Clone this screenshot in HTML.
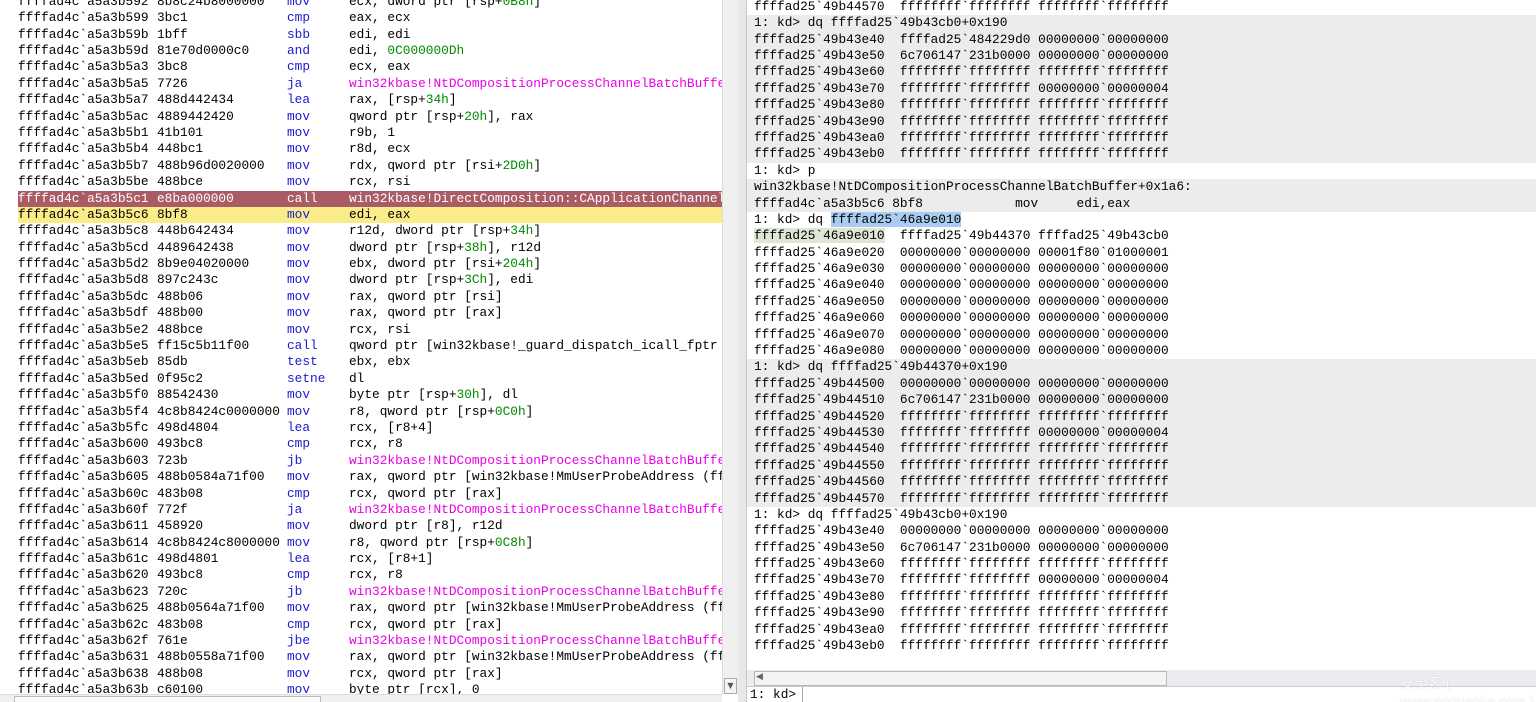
<!DOCTYPE html>
<html><head><meta charset="utf-8"><style>
html,body{margin:0;padding:0;width:1536px;height:702px;overflow:hidden;background:#fff;}
body{font-family:"Liberation Mono",monospace;font-size:12.8px;color:#000;position:relative;}
.l{position:absolute;left:0;top:-6.2px;width:722px;height:700px;overflow:hidden;}
.r{position:absolute;left:747px;top:-1.2px;width:789px;height:670px;overflow:hidden;}
.ln{height:16.4px;line-height:16.4px;white-space:pre;}
.l .ln{padding-left:18px;position:relative;}
.a{display:inline-block;width:139px}
.o{display:inline-block;width:130px}
.m{display:inline-block;width:62px;color:#1a1ad0}
.s{color:#e800e8}.n{color:#008a00}
.l .red{background:#a95c66;color:#fff;margin-left:18px;padding-left:0}.red .m{color:#fff}
.l .yel{background:#fbec8a;margin-left:18px;padding-left:0}
.r .ln{padding-left:7px}
.g{background:#ececec}
.hl{background:#dfe6d6}.sel{background:#a8cdf0}
</style></head><body>
<div class="l">
<div class="ln"><span class="a">ffffad4c`a5a3b592</span><span class="o">8b8c24b8000000</span><span class="m">mov</span>ecx, dword ptr [rsp+<span class="n">0B8h</span>]</div>
<div class="ln"><span class="a">ffffad4c`a5a3b599</span><span class="o">3bc1</span><span class="m">cmp</span>eax, ecx</div>
<div class="ln"><span class="a">ffffad4c`a5a3b59b</span><span class="o">1bff</span><span class="m">sbb</span>edi, edi</div>
<div class="ln"><span class="a">ffffad4c`a5a3b59d</span><span class="o">81e70d0000c0</span><span class="m">and</span>edi, <span class="n">0C000000Dh</span></div>
<div class="ln"><span class="a">ffffad4c`a5a3b5a3</span><span class="o">3bc8</span><span class="m">cmp</span>ecx, eax</div>
<div class="ln"><span class="a">ffffad4c`a5a3b5a5</span><span class="o">7726</span><span class="m">ja</span><span class="s">win32kbase!NtDCompositionProcessChannelBatchBuffer+0x1b8</span></div>
<div class="ln"><span class="a">ffffad4c`a5a3b5a7</span><span class="o">488d442434</span><span class="m">lea</span>rax, [rsp+<span class="n">34h</span>]</div>
<div class="ln"><span class="a">ffffad4c`a5a3b5ac</span><span class="o">4889442420</span><span class="m">mov</span>qword ptr [rsp+<span class="n">20h</span>], rax</div>
<div class="ln"><span class="a">ffffad4c`a5a3b5b1</span><span class="o">41b101</span><span class="m">mov</span>r9b, 1</div>
<div class="ln"><span class="a">ffffad4c`a5a3b5b4</span><span class="o">448bc1</span><span class="m">mov</span>r8d, ecx</div>
<div class="ln"><span class="a">ffffad4c`a5a3b5b7</span><span class="o">488b96d0020000</span><span class="m">mov</span>rdx, qword ptr [rsi+<span class="n">2D0h</span>]</div>
<div class="ln"><span class="a">ffffad4c`a5a3b5be</span><span class="o">488bce</span><span class="m">mov</span>rcx, rsi</div>
<div class="ln red"><span class="a">ffffad4c`a5a3b5c1</span><span class="o">e8ba000000</span><span class="m">call</span>win32kbase!DirectComposition::CApplicationChannel::ProcessCommandBuffer</div>
<div class="ln yel"><span class="a">ffffad4c`a5a3b5c6</span><span class="o">8bf8</span><span class="m">mov</span>edi, eax</div>
<div class="ln"><span class="a">ffffad4c`a5a3b5c8</span><span class="o">448b642434</span><span class="m">mov</span>r12d, dword ptr [rsp+<span class="n">34h</span>]</div>
<div class="ln"><span class="a">ffffad4c`a5a3b5cd</span><span class="o">4489642438</span><span class="m">mov</span>dword ptr [rsp+<span class="n">38h</span>], r12d</div>
<div class="ln"><span class="a">ffffad4c`a5a3b5d2</span><span class="o">8b9e04020000</span><span class="m">mov</span>ebx, dword ptr [rsi+<span class="n">204h</span>]</div>
<div class="ln"><span class="a">ffffad4c`a5a3b5d8</span><span class="o">897c243c</span><span class="m">mov</span>dword ptr [rsp+<span class="n">3Ch</span>], edi</div>
<div class="ln"><span class="a">ffffad4c`a5a3b5dc</span><span class="o">488b06</span><span class="m">mov</span>rax, qword ptr [rsi]</div>
<div class="ln"><span class="a">ffffad4c`a5a3b5df</span><span class="o">488b00</span><span class="m">mov</span>rax, qword ptr [rax]</div>
<div class="ln"><span class="a">ffffad4c`a5a3b5e2</span><span class="o">488bce</span><span class="m">mov</span>rcx, rsi</div>
<div class="ln"><span class="a">ffffad4c`a5a3b5e5</span><span class="o">ff15c5b11f00</span><span class="m">call</span>qword ptr [win32kbase!_guard_dispatch_icall_fptr (ff</div>
<div class="ln"><span class="a">ffffad4c`a5a3b5eb</span><span class="o">85db</span><span class="m">test</span>ebx, ebx</div>
<div class="ln"><span class="a">ffffad4c`a5a3b5ed</span><span class="o">0f95c2</span><span class="m">setne</span>dl</div>
<div class="ln"><span class="a">ffffad4c`a5a3b5f0</span><span class="o">88542430</span><span class="m">mov</span>byte ptr [rsp+<span class="n">30h</span>], dl</div>
<div class="ln"><span class="a">ffffad4c`a5a3b5f4</span><span class="o">4c8b8424c0000000</span><span class="m">mov</span>r8, qword ptr [rsp+<span class="n">0C0h</span>]</div>
<div class="ln"><span class="a">ffffad4c`a5a3b5fc</span><span class="o">498d4804</span><span class="m">lea</span>rcx, [r8+4]</div>
<div class="ln"><span class="a">ffffad4c`a5a3b600</span><span class="o">493bc8</span><span class="m">cmp</span>rcx, r8</div>
<div class="ln"><span class="a">ffffad4c`a5a3b603</span><span class="o">723b</span><span class="m">jb</span><span class="s">win32kbase!NtDCompositionProcessChannelBatchBuffer+0x200</span></div>
<div class="ln"><span class="a">ffffad4c`a5a3b605</span><span class="o">488b0584a71f00</span><span class="m">mov</span>rax, qword ptr [win32kbase!MmUserProbeAddress (ff</div>
<div class="ln"><span class="a">ffffad4c`a5a3b60c</span><span class="o">483b08</span><span class="m">cmp</span>rcx, qword ptr [rax]</div>
<div class="ln"><span class="a">ffffad4c`a5a3b60f</span><span class="o">772f</span><span class="m">ja</span><span class="s">win32kbase!NtDCompositionProcessChannelBatchBuffer+0x200</span></div>
<div class="ln"><span class="a">ffffad4c`a5a3b611</span><span class="o">458920</span><span class="m">mov</span>dword ptr [r8], r12d</div>
<div class="ln"><span class="a">ffffad4c`a5a3b614</span><span class="o">4c8b8424c8000000</span><span class="m">mov</span>r8, qword ptr [rsp+<span class="n">0C8h</span>]</div>
<div class="ln"><span class="a">ffffad4c`a5a3b61c</span><span class="o">498d4801</span><span class="m">lea</span>rcx, [r8+1]</div>
<div class="ln"><span class="a">ffffad4c`a5a3b620</span><span class="o">493bc8</span><span class="m">cmp</span>rcx, r8</div>
<div class="ln"><span class="a">ffffad4c`a5a3b623</span><span class="o">720c</span><span class="m">jb</span><span class="s">win32kbase!NtDCompositionProcessChannelBatchBuffer+0x200</span></div>
<div class="ln"><span class="a">ffffad4c`a5a3b625</span><span class="o">488b0564a71f00</span><span class="m">mov</span>rax, qword ptr [win32kbase!MmUserProbeAddress (ff</div>
<div class="ln"><span class="a">ffffad4c`a5a3b62c</span><span class="o">483b08</span><span class="m">cmp</span>rcx, qword ptr [rax]</div>
<div class="ln"><span class="a">ffffad4c`a5a3b62f</span><span class="o">761e</span><span class="m">jbe</span><span class="s">win32kbase!NtDCompositionProcessChannelBatchBuffer+0x200</span></div>
<div class="ln"><span class="a">ffffad4c`a5a3b631</span><span class="o">488b0558a71f00</span><span class="m">mov</span>rax, qword ptr [win32kbase!MmUserProbeAddress (ff</div>
<div class="ln"><span class="a">ffffad4c`a5a3b638</span><span class="o">488b08</span><span class="m">mov</span>rcx, qword ptr [rax]</div>
<div class="ln"><span class="a">ffffad4c`a5a3b63b</span><span class="o">c60100</span><span class="m">mov</span>byte ptr [rcx], 0</div>
</div>
<div style="position:absolute;left:722px;top:0;width:15px;height:694px;background:#f0f0f0;border-left:1px solid #dcdcdc;"></div>
<div style="position:absolute;left:724px;top:678px;width:11px;height:14px;border:1px solid #aaa;background:#f4f4f4;font-size:8px;line-height:14px;text-align:center;color:#555;font-family:'DejaVu Sans',sans-serif;">▼</div>
<div style="position:absolute;left:0;top:694px;width:722px;height:8px;background:#f0f0f0;border-top:1px solid #ddd;"></div>
<div style="position:absolute;left:14px;top:696px;width:305px;height:8px;border:1px solid #bbb;background:#fafafa"></div>
<div style="position:absolute;left:738px;top:0;width:8px;height:702px;background:#e8e8e8;border-right:1px solid #c8c8c8;"></div>
<div class="r">
<div class="ln">ffffad25`49b44570  ffffffff`ffffffff ffffffff`ffffffff</div>
<div class="ln g">1: kd&gt; dq ffffad25`49b43cb0+0x190</div>
<div class="ln g">ffffad25`49b43e40  ffffad25`484229d0 00000000`00000000</div>
<div class="ln g">ffffad25`49b43e50  6c706147`231b0000 00000000`00000000</div>
<div class="ln g">ffffad25`49b43e60  ffffffff`ffffffff ffffffff`ffffffff</div>
<div class="ln g">ffffad25`49b43e70  ffffffff`ffffffff 00000000`00000004</div>
<div class="ln g">ffffad25`49b43e80  ffffffff`ffffffff ffffffff`ffffffff</div>
<div class="ln g">ffffad25`49b43e90  ffffffff`ffffffff ffffffff`ffffffff</div>
<div class="ln g">ffffad25`49b43ea0  ffffffff`ffffffff ffffffff`ffffffff</div>
<div class="ln g">ffffad25`49b43eb0  ffffffff`ffffffff ffffffff`ffffffff</div>
<div class="ln">1: kd&gt; p</div>
<div class="ln g">win32kbase!NtDCompositionProcessChannelBatchBuffer+0x1a6:</div>
<div class="ln g">ffffad4c`a5a3b5c6 8bf8            mov     edi,eax</div>
<div class="ln">1: kd&gt; dq <span class="sel">ffffad25`46a9e010</span></div>
<div class="ln"><span class="hl">ffffad25`46a9e010</span>  ffffad25`49b44370 ffffad25`49b43cb0</div>
<div class="ln">ffffad25`46a9e020  00000000`00000000 00001f80`01000001</div>
<div class="ln">ffffad25`46a9e030  00000000`00000000 00000000`00000000</div>
<div class="ln">ffffad25`46a9e040  00000000`00000000 00000000`00000000</div>
<div class="ln">ffffad25`46a9e050  00000000`00000000 00000000`00000000</div>
<div class="ln">ffffad25`46a9e060  00000000`00000000 00000000`00000000</div>
<div class="ln">ffffad25`46a9e070  00000000`00000000 00000000`00000000</div>
<div class="ln">ffffad25`46a9e080  00000000`00000000 00000000`00000000</div>
<div class="ln g">1: kd&gt; dq ffffad25`49b44370+0x190</div>
<div class="ln g">ffffad25`49b44500  00000000`00000000 00000000`00000000</div>
<div class="ln g">ffffad25`49b44510  6c706147`231b0000 00000000`00000000</div>
<div class="ln g">ffffad25`49b44520  ffffffff`ffffffff ffffffff`ffffffff</div>
<div class="ln g">ffffad25`49b44530  ffffffff`ffffffff 00000000`00000004</div>
<div class="ln g">ffffad25`49b44540  ffffffff`ffffffff ffffffff`ffffffff</div>
<div class="ln g">ffffad25`49b44550  ffffffff`ffffffff ffffffff`ffffffff</div>
<div class="ln g">ffffad25`49b44560  ffffffff`ffffffff ffffffff`ffffffff</div>
<div class="ln g">ffffad25`49b44570  ffffffff`ffffffff ffffffff`ffffffff</div>
<div class="ln">1: kd&gt; dq ffffad25`49b43cb0+0x190</div>
<div class="ln">ffffad25`49b43e40  00000000`00000000 00000000`00000000</div>
<div class="ln">ffffad25`49b43e50  6c706147`231b0000 00000000`00000000</div>
<div class="ln">ffffad25`49b43e60  ffffffff`ffffffff ffffffff`ffffffff</div>
<div class="ln">ffffad25`49b43e70  ffffffff`ffffffff 00000000`00000004</div>
<div class="ln">ffffad25`49b43e80  ffffffff`ffffffff ffffffff`ffffffff</div>
<div class="ln">ffffad25`49b43e90  ffffffff`ffffffff ffffffff`ffffffff</div>
<div class="ln">ffffad25`49b43ea0  ffffffff`ffffffff ffffffff`ffffffff</div>
<div class="ln">ffffad25`49b43eb0  ffffffff`ffffffff ffffffff`ffffffff</div>
</div>
<div style="position:absolute;left:747px;top:670px;width:789px;height:16px;background:#ececf0;"></div>
<div style="position:absolute;left:754px;top:671px;width:411px;height:13px;border:1px solid #b8b8b8;background:#f4f4f4;"></div>
<div style="position:absolute;left:756px;top:671px;width:12px;height:13px;font-size:9px;line-height:13px;color:#666;font-family:'DejaVu Sans',sans-serif;">◀</div>
<div style="position:absolute;left:747px;top:686px;width:789px;height:16px;background:#fff;border-top:1px solid #ccc;"></div>
<div style="position:absolute;left:747px;top:687px;width:52px;height:15px;border-right:1px solid #aaa;line-height:15px;padding-left:3px;">1: kd&gt;</div>
<div style="position:absolute;left:1400px;top:673px;font-family:'Liberation Sans','Noto Sans CJK SC',sans-serif;font-size:14px;color:rgba(255,255,255,0.9);text-shadow:0 0 1px rgba(0,0,0,0.2);">安全客 ( www.anquanke.com )</div>
</body></html>
